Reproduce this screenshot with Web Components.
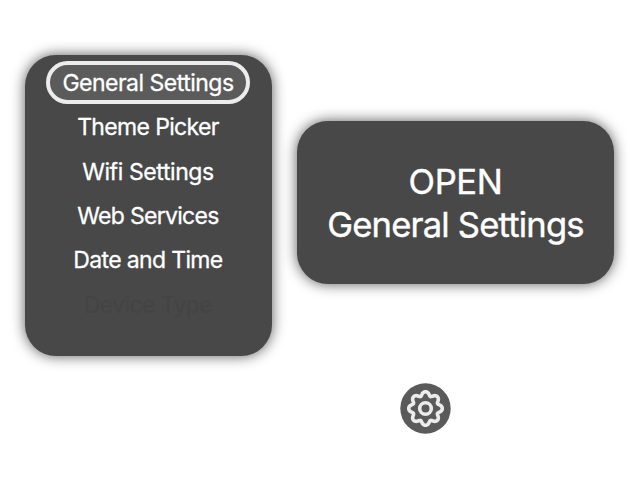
<!DOCTYPE html>
<html lang="en"><head><meta charset="utf-8"><title>Settings</title>
<style>
html,body{margin:0;width:640px;height:480px;overflow:hidden;background:#fff}
body{font-family:Inter,"Liberation Sans",sans-serif;color:#fff}
</style></head><body>
<settings-screen></settings-screen>
<script>
const define = (name, html) => customElements.define(name, class extends HTMLElement {
  constructor(){ super(); this.attachShadow({mode:'open'}).innerHTML = html; }
});
define('menu-item', `<style>
:host{display:flex;align-items:center;justify-content:center;box-sizing:border-box;height:44.3px;width:204px;padding-top:1px;font-size:23px;line-height:30px;white-space:nowrap;letter-spacing:var(--track,-.6px);-webkit-text-stroke:.3px currentColor}
:host([selected]){height:43px;padding-top:0;margin-bottom:.6px;border:4px solid #ececec;border-radius:22px;background:#5b5b5b}
:host([faded]){color:#444;-webkit-text-stroke:0;padding-top:3px}
</style><span><slot></slot></span>`);
define('settings-menu', `<style>
:host{display:flex;flex-direction:column;align-items:center;box-sizing:border-box;width:247px;height:301px;padding:6px 1px 0 0;border-radius:31px;background:#484848;box-shadow:0 0 14px rgba(0,0,0,.65)}
</style><slot></slot>`);
define('action-card', `<style>
:host{display:flex;flex-direction:column;align-items:center;justify-content:center;box-sizing:border-box;width:317px;height:163px;border-radius:31px;background:#484848;box-shadow:0 0 14px rgba(0,0,0,.65);font-size:34.6px;line-height:43px;white-space:nowrap;-webkit-text-stroke:.4px currentColor}
::slotted(*){letter-spacing:-.8px}
</style><slot></slot>`);
define('gear-button', `<style>
:host{display:block;width:51px;height:51px}svg{display:block}
</style><svg width="51" height="51" viewBox="-25.5 -25.5 51 51"><circle r="25.2" fill="#5a5a5a"/><g fill="none" stroke="#ececec" stroke-width="3.6" stroke-linejoin="round"><path id="gear"/><circle r="5.8"/></g></svg>`);
define('settings-screen', `<style>
:host{display:grid;grid-template-columns:247px 317px;column-gap:25px;box-sizing:border-box;width:640px;height:480px;padding:55px 0 0 25px;align-items:start}
.right{display:flex;flex-direction:column;align-items:center;padding-top:66px}
gear-button{margin:99px 60px 0 0}
</style>
<settings-menu><menu-item selected style="--track:-.5px">General Settings</menu-item><menu-item style="--track:-.65px">Theme Picker</menu-item><menu-item style="--track:-.4px">Wifi Settings</menu-item><menu-item style="--track:-.7px">Web Services</menu-item><menu-item style="--track:-.65px">Date and Time</menu-item><menu-item faded>Device Type</menu-item></settings-menu>
<div class="right"><action-card><span style="letter-spacing:-.4px">OPEN</span><span>General Settings</span></action-card><gear-button></gear-button></div>`);
const gear = document.querySelector('settings-screen').shadowRoot.querySelector('gear-button').shadowRoot.querySelector('#gear');
let d = '';
for (let i = 0; i < 160; i++) {
  const a = i * Math.PI / 80, r = 15.1 + 1.9 * Math.cos(8 * a) - .25 * Math.cos(16 * a);
  d += (i ? 'L' : 'M') + (r * Math.sin(a)).toFixed(2) + ' ' + (-r * Math.cos(a)).toFixed(2);
}
gear.setAttribute('d', d + 'Z');
</script></body></html>
